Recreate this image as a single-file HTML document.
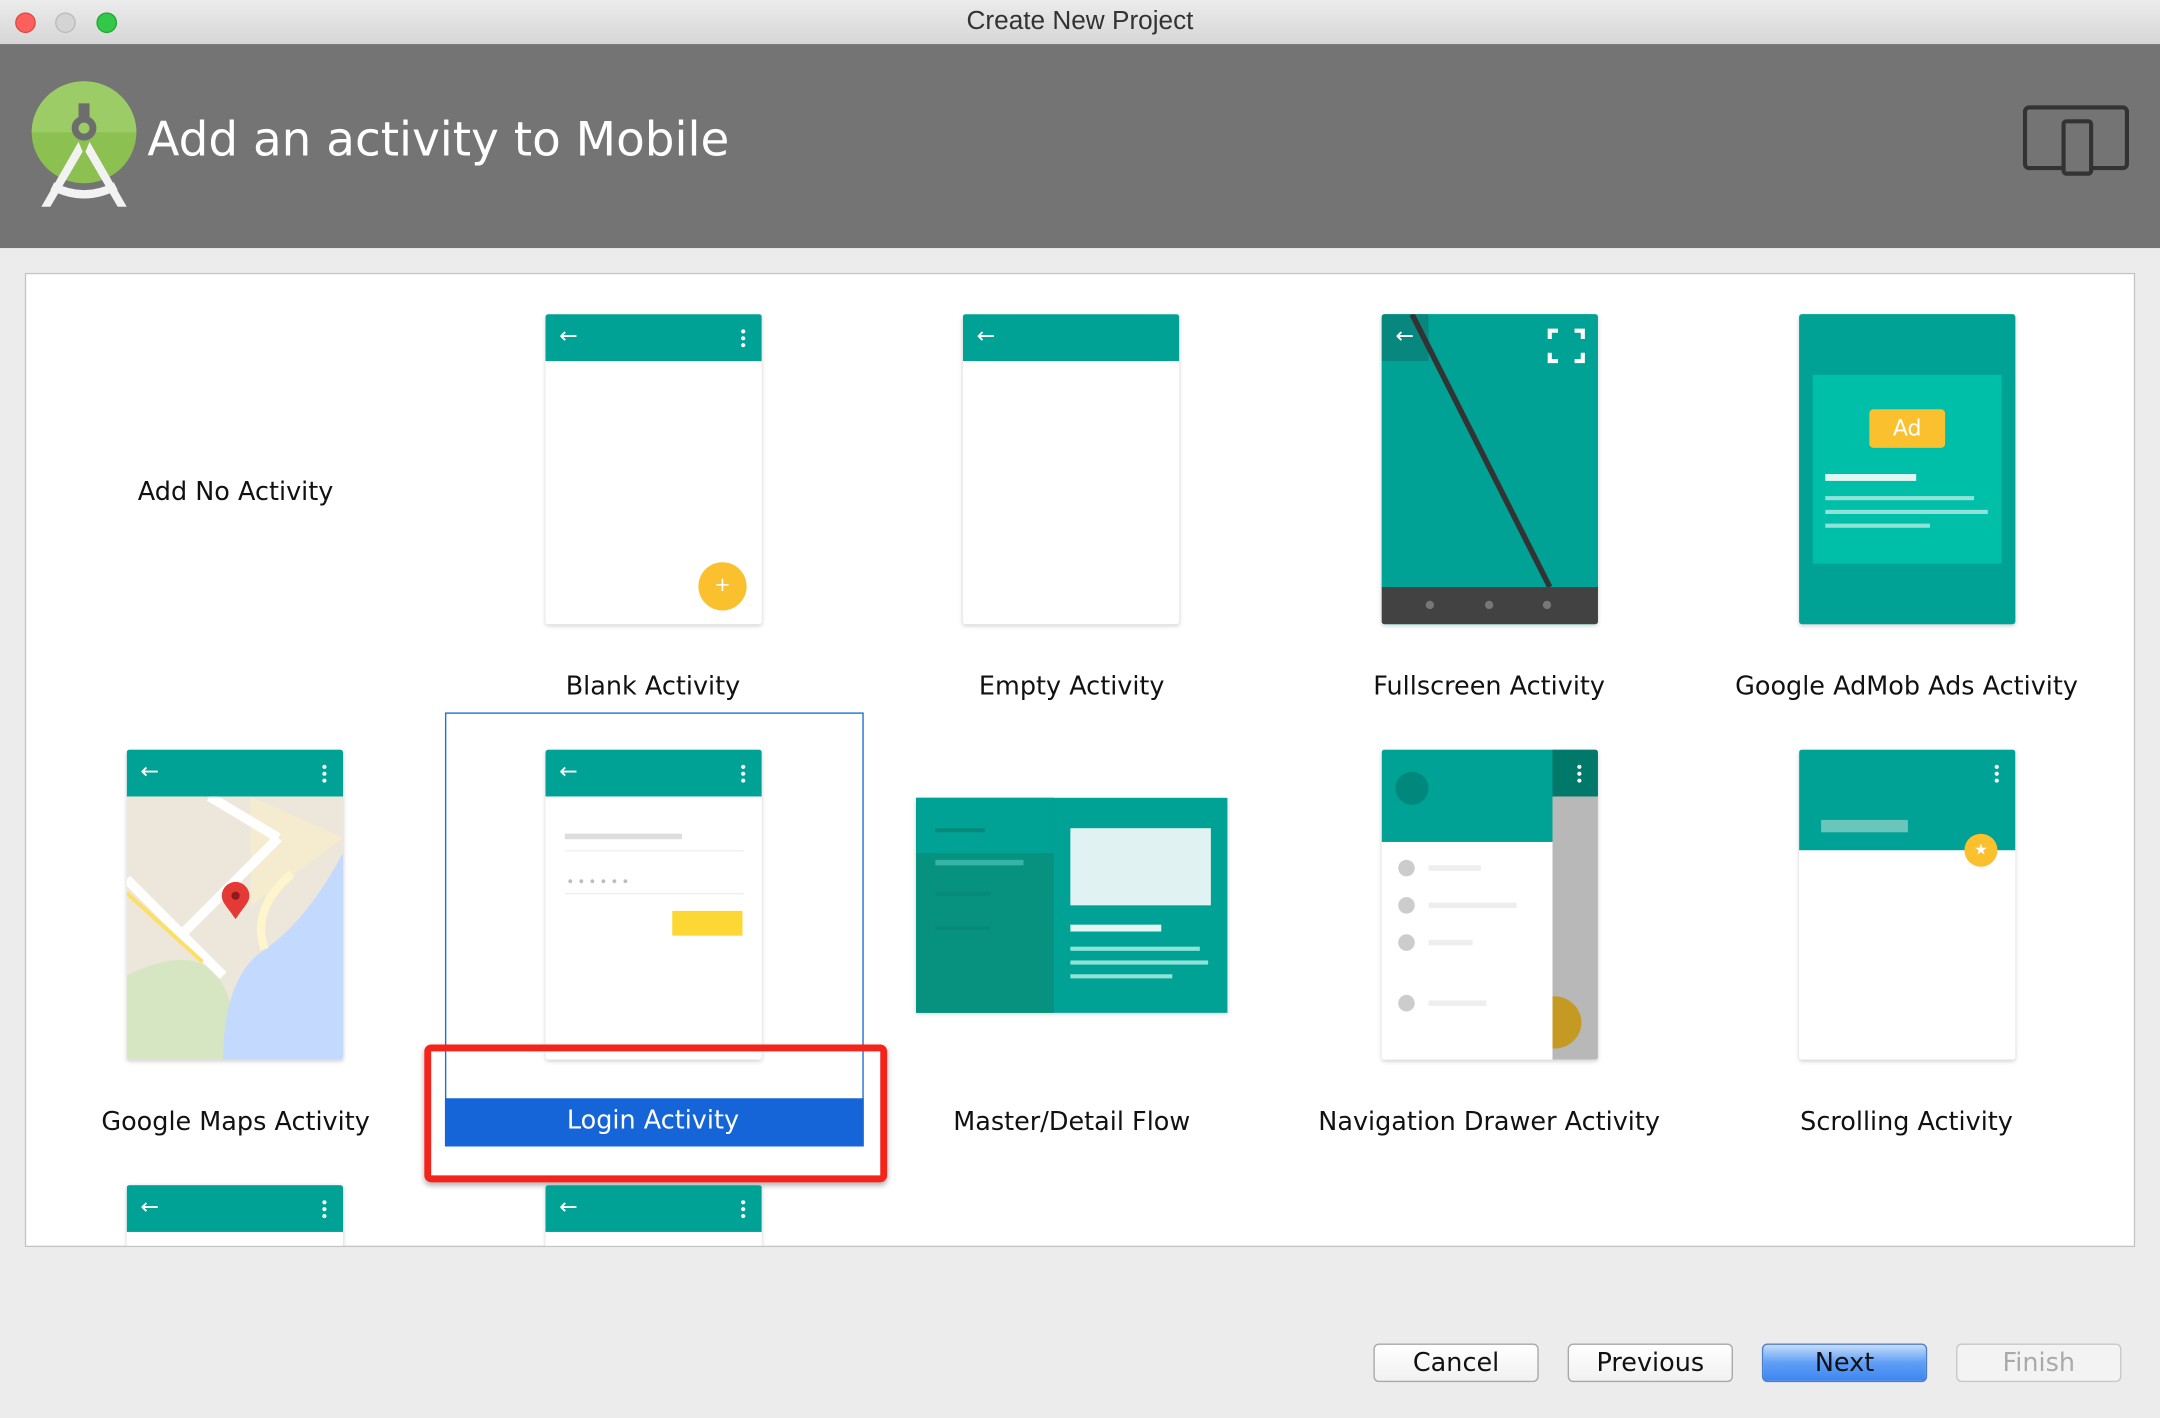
<!DOCTYPE html>
<html><head><meta charset="utf-8"><style>
html,body{margin:0;padding:0;width:2160px;height:1418px;overflow:hidden;background:#ececec}
#s{position:absolute;left:0;top:0;width:1568px;height:1029px;transform:scale(1.37755,1.378);transform-origin:0 0;font-family:"DejaVu Sans","Liberation Sans",sans-serif;background:#ececec;overflow:hidden}
.a{position:absolute}
.ph{position:absolute;width:157px;height:225px;background:#fff;box-shadow:0 1px 3px rgba(0,0,0,.18);border-radius:2px;overflow:hidden}
.tb{position:absolute;left:0;top:0;width:100%;height:34px;background:#00a295}
.ar{position:absolute;left:10px;top:8px;color:#fff;font-size:16px;line-height:16px}
.dt{position:absolute;right:12px;top:10px;width:3px;height:14px;background:radial-gradient(circle,#fff 1.4px,transparent 1.6px) 0 0/3px 5px repeat-y}
.lb{position:absolute;font-size:18.5px;color:#111;text-align:center;width:300px;white-space:nowrap}
.bt{position:absolute;top:975px;width:120px;height:28px;border:1px solid #a9a9a9;border-radius:4px;background:linear-gradient(#fff,#f1f1f1);font-size:18.5px;text-align:center;line-height:28px;color:#111;box-sizing:border-box}
</style></head><body><div id="s">
<div class="a" style="left:0;top:0;width:1568px;height:32px;background:linear-gradient(#ececec,#d6d6d6);border-bottom:1px solid #b3b3b3"></div>
<div class="a" style="left:11px;top:9px;width:15px;height:15px;border-radius:50%;background:#fc605c;border:1px solid #de4a44;box-sizing:border-box"></div>
<div class="a" style="left:40px;top:9px;width:15px;height:15px;border-radius:50%;background:#d4d4d4;border:1px solid #bbb;box-sizing:border-box"></div>
<div class="a" style="left:70px;top:9px;width:15px;height:15px;border-radius:50%;background:#34c84a;border:1px solid #22a634;box-sizing:border-box"></div>
<div class="a" style="left:0;top:5px;width:1568px;text-align:center;font-family:'Liberation Sans',sans-serif;font-size:19px;color:#333">Create New Project</div>
<div class="a" style="left:0;top:32px;width:1568px;height:148px;background:#747474"></div>
<svg class="a" style="left:20px;top:55px" width="82" height="95" viewBox="0 0 82 95">
<ellipse cx="41" cy="41" rx="38" ry="37" fill="#8cc151"/><path d="M3 41a38 37 0 0 1 76 0z" fill="#9ccc65"/>
<path d="M37 48L10 95l6 1L40 55zM45 48l27 47-6 1L42 55z" fill="#f2f2f2"/>
<path d="M18 80q23 12 46 0" stroke="#f2f2f2" stroke-width="6" fill="none"/>
<rect x="37" y="20" width="8" height="10" fill="#6d6d6d"/><circle cx="41" cy="38" r="9" fill="#6d6d6d"/><circle cx="41" cy="38" r="4" fill="#9ccc65"/>
</svg>
<div class="a" style="left:107px;top:82px;font-size:34px;color:#fff">Add an activity to Mobile</div>
<svg class="a" style="left:1468px;top:76px" width="78" height="52"><rect x="2" y="2" width="74" height="44" rx="3" fill="none" stroke="#333" stroke-width="3"/><rect x="30" y="12" width="20" height="38" rx="2" fill="#747474" stroke="#333" stroke-width="3"/></svg>
<div class="a" style="left:18px;top:198px;width:1532px;height:707px;background:#fff;border:1px solid #c4c4c4;box-sizing:border-box;overflow:hidden">
<div class="a" style="left:-18px;top:-198px;width:1568px;height:1029px">
<div class="lb" style="left:20px;top:346px">Add No Activity</div>
<div class="ph" style="left:395px;top:227px"><div class="tb"><span class="ar">←</span><i class="dt"></i></div><div class="a" style="left:111px;top:180px;width:35px;height:35px;border-radius:50%;background:#fbc02d;color:#fff;text-align:center;line-height:35px;font-size:14px">+</div></div>
<div class="ph" style="left:698px;top:227px"><div class="tb"><span class="ar">←</span></div></div>
<div class="ph" style="left:1002px;top:227px;background:#00a295"><svg class="a" style="left:0;top:0" width="157" height="225"><rect x="0" y="0" width="34" height="34" fill="#07877d"/><path d="M22 0L122 198" stroke="#333" stroke-width="4"/><rect x="0" y="198" width="157" height="27" fill="#424242"/><circle cx="35" cy="211" r="3" fill="#777"/><circle cx="78" cy="211" r="3" fill="#777"/><circle cx="120" cy="211" r="3" fill="#777"/><path d="M122 18v-6h6M140 12h6v6M146 28v6h-6M128 34h-6v-6" stroke="#fff" stroke-width="3" fill="none"/></svg><span class="ar">←</span></div>
<div class="ph" style="left:1305px;top:227px;background:#00a295"><div class="a" style="left:10px;top:44px;width:137px;height:137px;background:#00bfa9"></div><div class="a" style="left:51px;top:69px;width:55px;height:28px;border-radius:3px;background:#fbc02d;color:#fff;text-align:center;line-height:28px;font-size:16px">Ad</div><div class="a" style="left:19px;top:116px;width:66px;height:5px;background:#e0f7f4"></div><div class="a" style="left:19px;top:132px;width:108px;height:3px;background:#8fe3d8"></div><div class="a" style="left:19px;top:142px;width:118px;height:3px;background:#8fe3d8"></div><div class="a" style="left:19px;top:152px;width:76px;height:3px;background:#8fe3d8"></div></div>
<div class="lb" style="left:323px;top:487px">Blank Activity</div>
<div class="lb" style="left:627px;top:487px">Empty Activity</div>
<div class="lb" style="left:930px;top:487px">Fullscreen Activity</div>
<div class="lb" style="left:1233px;top:487px">Google AdMob Ads Activity</div>
<div class="ph" style="left:91px;top:543px"><svg class="a" style="left:0;top:34px" width="157" height="191"><rect width="157" height="191" fill="#ece7da"/><path d="M90 0v80l67-50" fill="#f5ecd0"/><path d="M0 191V130q40-20 60-5t20 66z" fill="#d6e6c2"/><path d="M70 191q0-60 30-80t57-70v150z" fill="#c3dafe"/><path d="M100 111q-10-30 20-55" stroke="#fff5cc" stroke-width="6" fill="none"/><path d="M0 60L40 100M40 100L110 30M60 0L110 30M40 100l30 30" stroke="#fff" stroke-width="7" fill="none"/><path d="M0 70l55 50" stroke="#fcdf6b" stroke-width="3"/><path d="M79 89c-6-9-10-12-10-17a10 10 0 0 1 20 0c0 5-4 8-10 17z" fill="#e53935"/><circle cx="79" cy="72" r="3" fill="#8b1d1d"/></svg><div class="tb"><span class="ar">←</span><i class="dt"></i></div></div>
<div class="a" style="left:322px;top:516px;width:304px;height:315px;border:1px solid #1c6fd6;box-sizing:border-box"></div>
<div class="ph" style="left:395px;top:543px"><div class="tb"><span class="ar">←</span><i class="dt"></i></div><div class="a" style="left:14px;top:61px;width:85px;height:4px;background:#ddd"></div><div class="a" style="left:14px;top:73px;width:130px;height:1px;background:#eee"></div><div class="a" style="left:14px;top:94px;width:48px;height:3px;background:radial-gradient(circle,#bbb 1.3px,transparent 1.5px) 0 0/8px 3px repeat-x"></div><div class="a" style="left:14px;top:104px;width:130px;height:1px;background:#eee"></div><div class="a" style="left:92px;top:117px;width:51px;height:18px;background:#fdd835"></div></div>
<div class="a" style="left:322px;top:796px;width:304px;height:35px;background:#1565d8"></div>
<div class="lb" style="left:323px;top:802px;color:#fff">Login Activity</div>
<div class="a" style="left:307px;top:757px;width:336px;height:100px;border:5px solid #f4241b;border-radius:5px;box-sizing:border-box;box-shadow:0 2px 4px rgba(0,0,0,.3)"></div>
<div class="a" style="left:664px;top:578px;width:226px;height:156px;background:#00a295;box-shadow:0 1px 3px rgba(0,0,0,.2)"><div class="a" style="left:0;top:0;width:100px;height:156px;background:#07917f"></div><div class="a" style="left:0;top:0;width:100px;height:40px;background:#00a295"></div><div class="a" style="left:14px;top:22px;width:36px;height:3px;background:#078a7c"></div><div class="a" style="left:14px;top:45px;width:64px;height:4px;background:#35b4a8"></div><div class="a" style="left:14px;top:68px;width:40px;height:3px;background:#078a7c"></div><div class="a" style="left:14px;top:93px;width:40px;height:3px;background:#078a7c"></div><div class="a" style="left:112px;top:22px;width:102px;height:56px;background:#e0f2f1"></div><div class="a" style="left:112px;top:92px;width:66px;height:5px;background:#e0f7f4"></div><div class="a" style="left:112px;top:108px;width:94px;height:3px;background:#8fe3d8"></div><div class="a" style="left:112px;top:118px;width:100px;height:3px;background:#8fe3d8"></div><div class="a" style="left:112px;top:128px;width:74px;height:3px;background:#8fe3d8"></div></div>
<div class="ph" style="left:1002px;top:543px"><div class="a" style="left:0;top:0;width:124px;height:67px;background:#00a295"></div><div class="a" style="left:10px;top:16px;width:24px;height:24px;border-radius:50%;background:#00887c"></div><div class="a" style="left:124px;top:0;width:33px;height:225px;background:#b8b8b8"></div><div class="a" style="left:124px;top:0;width:33px;height:34px;background:#00796b"></div><i class="dt" style="right:12px"></i><div class="a" style="left:12px;top:80px;width:12px;height:12px;border-radius:50%;background:#ccc"></div><div class="a" style="left:34px;top:84px;width:38px;height:4px;background:#eee"></div><div class="a" style="left:12px;top:107px;width:12px;height:12px;border-radius:50%;background:#ccc"></div><div class="a" style="left:34px;top:111px;width:64px;height:4px;background:#eee"></div><div class="a" style="left:12px;top:134px;width:12px;height:12px;border-radius:50%;background:#ccc"></div><div class="a" style="left:34px;top:138px;width:32px;height:4px;background:#eee"></div><div class="a" style="left:12px;top:178px;width:12px;height:12px;border-radius:50%;background:#ccc"></div><div class="a" style="left:34px;top:182px;width:42px;height:4px;background:#eee"></div><div class="a" style="left:105px;top:179px;width:40px;height:38px;border-radius:50%;background:#c49a22;clip-path:inset(0 0 0 19px)"></div></div>
<div class="ph" style="left:1305px;top:543px"><div class="a" style="left:0;top:0;width:157px;height:73px;background:#00a295"></div><i class="dt"></i><div class="a" style="left:16px;top:51px;width:63px;height:9px;background:#6ac5bc"></div><div class="a" style="left:120px;top:61px;width:24px;height:24px;border-radius:50%;background:#fbc02d;color:#fff;font-size:11px;text-align:center;line-height:24px">★</div></div>
<div class="lb" style="left:20px;top:803px">Google Maps Activity</div>
<div class="lb" style="left:627px;top:803px">Master/Detail Flow</div>
<div class="lb" style="left:930px;top:803px">Navigation Drawer Activity</div>
<div class="lb" style="left:1233px;top:803px">Scrolling Activity</div>
<div class="ph" style="left:91px;top:859px"><div class="tb"><span class="ar">←</span><i class="dt"></i></div></div>
<div class="ph" style="left:395px;top:859px"><div class="tb"><span class="ar">←</span><i class="dt"></i></div></div>
</div></div>
<div class="bt" style="left:997px">Cancel</div>
<div class="bt" style="left:1138px">Previous</div>
<div class="bt" style="left:1279px;background:linear-gradient(#c4dcfb,#5f9ef5 50%,#3d86f1);border-color:#4f7fc4">Next</div>
<div class="bt" style="left:1420px;color:#aaa;border-color:#c8c8c8;background:#f3f3f3">Finish</div>
</div></body></html>
